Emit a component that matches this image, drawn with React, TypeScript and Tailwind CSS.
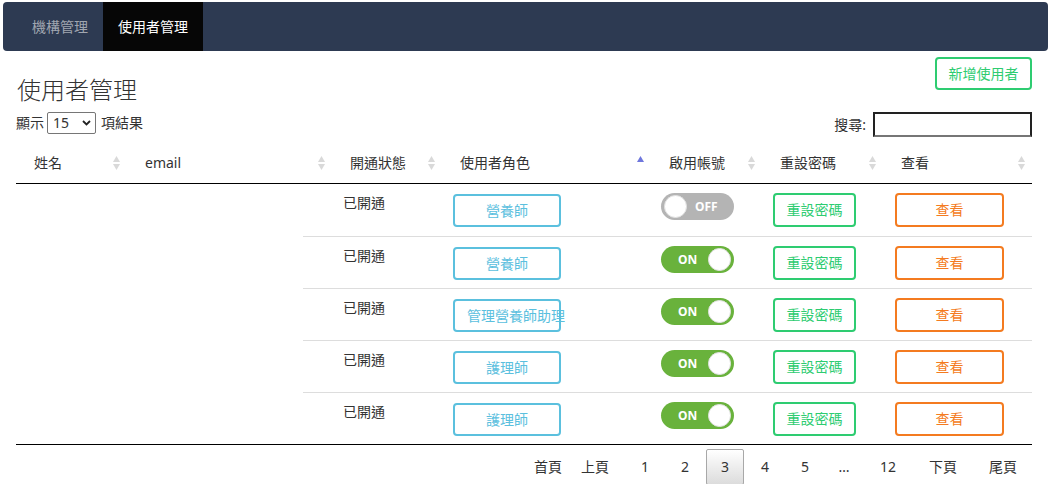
import React from 'react';

const headers = [
  { label: '姓名', w: 'w-[111px]', sort: 'both' },
  { label: 'email', w: 'w-[205px]', sort: 'both' },
  { label: '開通狀態', w: 'w-[110px]', sort: 'both' },
  { label: '使用者角色', w: 'w-[209px]', sort: 'asc' },
  { label: '啟用帳號', w: 'w-[111px]', sort: 'both' },
  { label: '重設密碼', w: 'w-[121px]', sort: 'both' },
  { label: '查看', w: 'w-[149px]', sort: 'both' },
];

const rows = [
  { role: '營養師', on: false },
  { role: '營養師', on: true },
  { role: '管理營養師助理', on: true },
  { role: '護理師', on: true },
  { role: '護理師', on: true },
];

const pages = [
  { label: '首頁', w: 'w-[32px]' },
  { label: '上頁', w: 'w-[58px]' },
  { label: '1', w: 'w-[38px]' },
  { label: '2', w: 'w-[38px]' },
  { label: '3', w: 'w-[38px]', current: true },
  { label: '4', w: 'w-[38px]' },
  { label: '5', w: 'w-[38px]' },
  { label: '…', w: 'w-[36px]' },
  { label: '12', w: 'w-[48px]' },
  { label: '下頁', w: 'w-[58px]' },
  { label: '尾頁', w: 'w-[58px]' },
];

function SortIcon({ mode }: { mode: string }) {
  return (
    <svg width="7" height="14" viewBox="0 0 7 14" className="absolute right-[7px] top-[14px]">
      {mode === 'asc' ? (
        <polygon points="0,6 3.5,0 7,6" fill="#6f77dd" />
      ) : (
        <>
          <polygon points="0,6 3.5,0 7,6" fill="#d9d9d9" />
          <polygon points="0,8 7,8 3.5,14" fill="#d9d9d9" />
        </>
      )}
    </svg>
  );
}

function Toggle({ on }: { on: boolean }) {
  if (on) {
    return (
      <div className="w-[73px] h-[27px] rounded-full bg-[#69b23c] flex items-center justify-between pl-[17px] pr-[3px]">
        <span className="text-white text-[12px] font-bold leading-none">ON</span>
        <span className="w-[23px] h-[23px] rounded-full bg-white border border-[#e2e2e2]" />
      </div>
    );
  }
  return (
    <div className="w-[73px] h-[27px] rounded-full bg-[#b4b4b4] flex items-center pl-[3px]">
      <span className="w-[23px] h-[23px] rounded-full bg-white border border-[#e2e2e2]" />
      <span className="ml-[8px] text-white text-[12px] font-bold leading-none">OFF</span>
    </div>
  );
}

export default function App() {
  return (
    <div className="w-[1051px] h-[484px] overflow-hidden bg-white text-[14px] leading-[20px] text-[#333] font-['Noto_Sans','Noto_Sans_CJK_TC',sans-serif]">
      {/* Top nav */}
      <nav className="mx-[3px] mt-[2px] h-[49px] rounded-[4px] bg-[#2d3a52] flex pl-[14px]">
        <a className="px-[15px] flex items-center text-[#a1a6b0]">機構管理</a>
        <a className="px-[15px] flex items-center bg-[#060606] text-white">使用者管理</a>
      </nav>

      <div className="ml-[16px] w-[1016px]">
        {/* title row */}
        <div className="flex justify-between items-start h-[61px]">
          <h1 className="mt-[22px] text-[24px] leading-[34px] font-light text-[#333] pl-[1px]">使用者管理</h1>
          <button className="mt-[6px] h-[33px] w-[97px] rounded-[4px] border-2 border-[#2ecc71] text-[#2ecc71] text-[14px]">
            新增使用者
          </button>
        </div>

        {/* length + search */}
        <div className="flex justify-between items-start h-[25px]">
          <div className="flex items-center h-[22px]">
            <span>顯示</span>
            <div className="ml-[3px] w-[49px] h-[22px] border border-[#767676] rounded-[2px] flex items-center justify-between pl-[5px] pr-[4px]">
              <span className="text-[14px]">15</span>
              <svg width="9" height="6" viewBox="0 0 9 6">
                <path d="M1 1 L4.5 4.5 L8 1" stroke="#222" strokeWidth="1.8" fill="none" />
              </svg>
            </div>
            <span className="ml-[5px]">項結果</span>
          </div>
          <div className="flex items-center h-[25px]">
            <span className="mr-[7px]">搜尋:</span>
            <input className="w-[159px] h-[25px] border-2 border-[#222] border-b-[#767676] outline-none" />
          </div>
        </div>

        {/* table header */}
        <div className="mt-[5px] flex border-b border-black h-[42px]">
          {headers.map((h) => (
            <div key={h.label} className={`${h.w} relative pl-[18px] flex items-center`}>
              {h.label}
              <SortIcon mode={h.sort} />
            </div>
          ))}
        </div>

        {/* table body */}
        <div className="border-b border-black">
          {rows.map((r, i) => (
            <div key={i} className="flex h-[52px]">
              <div className="w-[287px]" />
              <div className={`flex-1 flex ${i > 0 ? 'border-t border-[#dddddd]' : ''}`}>
                <div className="w-[150px] pl-[40px] pt-[9px]">已開通</div>
                <div className="w-[208px] pt-[10px]">
                  <div className="w-[108px] h-[33px] rounded-[4px] border-2 border-[#5bc0de] text-[#5bc0de] whitespace-nowrap px-[12px] text-center leading-[29px]">
                    {r.role}
                  </div>
                </div>
                <div className="w-[112px] pt-[9px]">
                  <Toggle on={r.on} />
                </div>
                <div className="w-[122px] pt-[9px]">
                  <button className="w-[83px] h-[34px] rounded-[4px] border-2 border-[#2ecc71] text-[#2ecc71]">
                    重設密碼
                  </button>
                </div>
                <div className="flex-1 pt-[9px]">
                  <button className="w-[109px] h-[34px] rounded-[4px] border-2 border-[#f47b20] text-[#f47b20]">
                    查看
                  </button>
                </div>
              </div>
            </div>
          ))}
        </div>

        {/* pagination */}
        <div className="mt-[4px] flex justify-end">
          {pages.map((p) => (
            <div
              key={p.label}
              className={`${p.w} ml-[2px] h-[36px] flex items-center justify-center rounded-[2px] border ${
                p.current
                  ? 'border-[#a8a8a8] bg-gradient-to-b from-white to-[#dcdcdc]'
                  : 'border-transparent'
              }`}
            >
              {p.label}
            </div>
          ))}
        </div>
      </div>
    </div>
  );
}
